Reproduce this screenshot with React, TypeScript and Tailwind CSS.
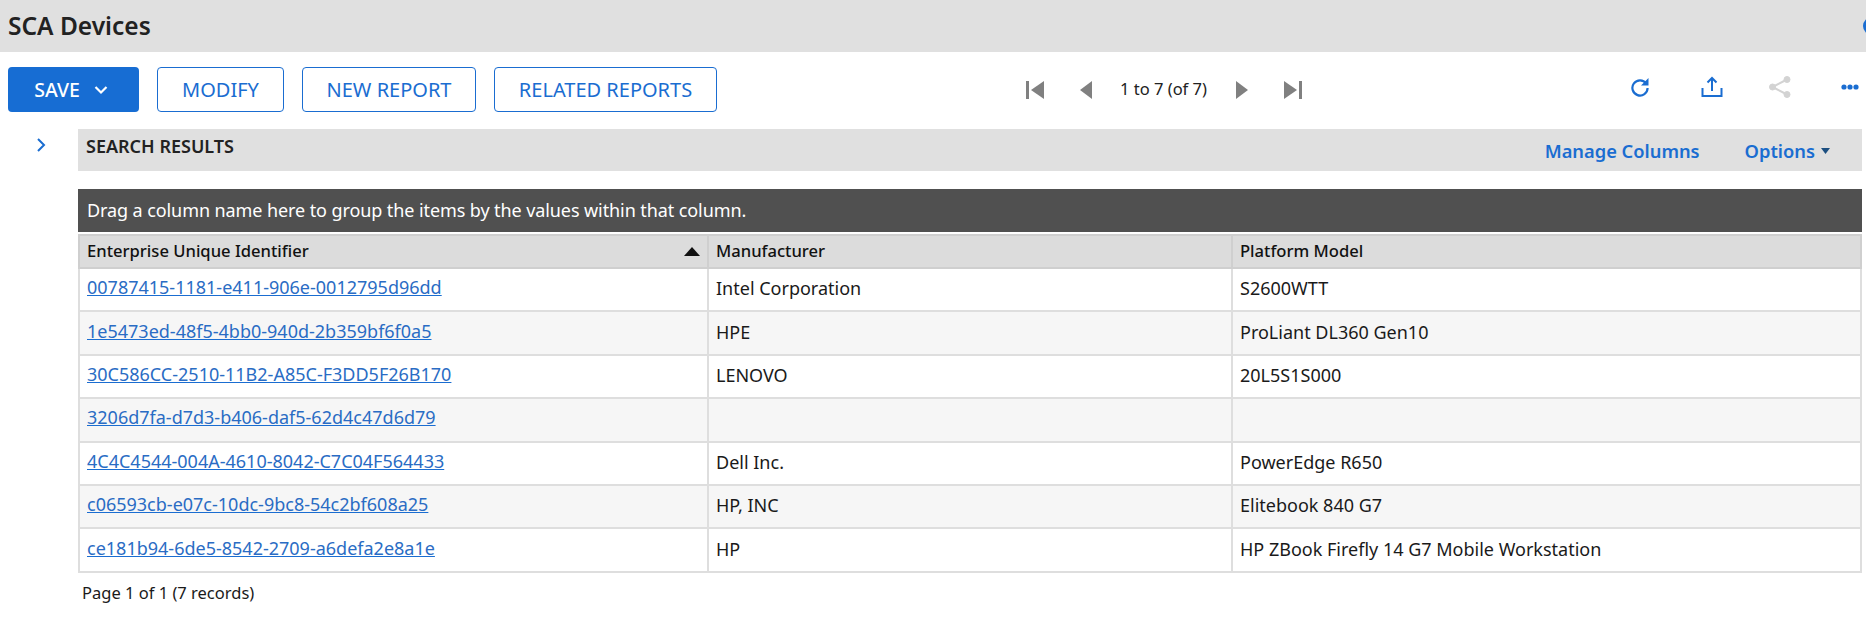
import React from "react";

const rows = [
  ["00787415-1181-e411-906e-0012795d96dd", "Intel Corporation", "S2600WTT"],
  ["1e5473ed-48f5-4bb0-940d-2b359bf6f0a5", "HPE", "ProLiant DL360 Gen10"],
  ["30C586CC-2510-11B2-A85C-F3DD5F26B170", "LENOVO", "20L5S1S000"],
  ["3206d7fa-d7d3-b406-daf5-62d4c47d6d79", "", ""],
  ["4C4C4544-004A-4610-8042-C7C04F564433", "Dell Inc.", "PowerEdge R650"],
  ["c06593cb-e07c-10dc-9bc8-54c2bf608a25", "HP, INC", "Elitebook 840 G7"],
  ["ce181b94-6de5-8542-2709-a6defa2e8a1e", "HP", "HP ZBook Firefly 14 G7 Mobile Workstation"],
];

function OutlineBtn({ label, w }: { label: string; w: string }) {
  return (
    <button className={`h-[45px] ${w} rounded-[4px] border border-[#1a6dd1] bg-white text-[20px] text-[#1a6dd1] flex items-center justify-center`}>
      {label}
    </button>
  );
}

export default function App() {
  return (
    <div className="w-[1866px] h-[619px] overflow-hidden bg-white text-[#1a1a1a] font-['Noto_Sans','Open_Sans',sans-serif]">
      <div className="h-[52px] bg-[#e0e0e0] flex items-center justify-between overflow-hidden">
        <h1 className="ml-2 text-[24.5px] font-semibold text-[#222] leading-none">SCA Devices</h1>
        <div className="w-[18px] h-[18px] -mr-[15px] rounded-full bg-[#1a6dd1]" />
      </div>

      <div className="h-[77px] pt-[15px] flex items-start relative">
        <div className="ml-2 flex gap-[18px]">
          <button className="h-[45px] w-[131px] pr-[5px] rounded-[4px] bg-[#176dd3] text-white text-[19.5px] font-medium flex items-center justify-center gap-[14px]">
            SAVE
            <svg width="14" height="10" viewBox="0 0 14 10" fill="none" stroke="white" strokeWidth="2.2"><path d="M1.5 2 L7 7.5 L12.5 2" /></svg>
          </button>
          <OutlineBtn label="MODIFY" w="w-[127px]" />
          <OutlineBtn label="NEW REPORT" w="w-[174px]" />
          <OutlineBtn label="RELATED REPORTS" w="w-[223px]" />
        </div>

        <div className="absolute left-[1026px] top-[15px] h-[45px] flex items-center">
          <svg width="18" height="18" viewBox="0 0 18 18" fill="#808080"><rect x="0" y="0" width="3" height="18" /><path d="M18 0 V18 L5 9 Z" /></svg>
          <svg className="ml-[36px]" width="12" height="18" viewBox="0 0 12 18" fill="#808080"><path d="M12 0 V18 L0 9 Z" /></svg>
          <span className="ml-[28px] text-[16.5px] text-[#222] w-[86px] whitespace-nowrap">1 to 7 (of 7)</span>
          <svg className="ml-[30px]" width="12" height="18" viewBox="0 0 12 18" fill="#808080"><path d="M0 0 V18 L12 9 Z" /></svg>
          <svg className="ml-[36px]" width="18" height="18" viewBox="0 0 18 18" fill="#808080"><path d="M0 0 V18 L13 9 Z" /><rect x="15" y="0" width="3" height="18" /></svg>
        </div>

        <div className="absolute left-[1630px] top-[24px] flex items-center">
          <svg width="20" height="20" viewBox="0 0 20 20" fill="none">
            <path d="M16.2 6.5 A7.6 7.6 0 1 0 17.6 11" stroke="#1a6dd1" strokeWidth="2.2" />
            <path d="M18.5 1 V8.5 H11 Z" fill="#1a6dd1" />
          </svg>
          <svg className="ml-[51px]" width="22" height="22" viewBox="0 0 22 22" fill="none" stroke="#1a6dd1" strokeWidth="2">
            <path d="M11 15 V2 M6.5 6.5 L11 2 L15.5 6.5" />
            <path d="M1.5 12 V20 H20.5 V12" />
          </svg>
          <svg className="ml-[46px]" width="22" height="22" viewBox="0 0 22 22" fill="#d3d3d3" stroke="#d3d3d3">
            <circle cx="3.5" cy="11" r="3" /><circle cx="18" cy="3.5" r="3" /><circle cx="18" cy="18.5" r="3" />
            <path d="M3.5 11 L18 3.5 M3.5 11 L18 18.5" strokeWidth="2" fill="none" />
          </svg>
          <svg className="ml-[50px]" width="18" height="6" viewBox="0 0 18 6" fill="#1a6dd1">
            <circle cx="3" cy="3" r="2.6" /><circle cx="9" cy="3" r="2.6" /><circle cx="15" cy="3" r="2.6" />
          </svg>
        </div>
      </div>

      <div className="flex">
        <div className="w-[78px] shrink-0 pl-[36px] pt-[8px]">
          <svg width="10" height="16" viewBox="0 0 10 16" fill="none" stroke="#1a6dd1" strokeWidth="2"><path d="M2 2 L8 8 L2 14" /></svg>
        </div>
        <div className="w-[1784px]">
          <div className="h-[42px] bg-[#e0e0e0] flex justify-between">
            <div className="pl-[8px] pt-[5px] text-[18px] font-semibold text-[#222] leading-[24px]">SEARCH RESULTS</div>
            <div className="flex items-start pt-[10px] text-[18.3px] font-semibold text-[#1a6dd1] leading-[24px]">
              <span>Manage Columns</span>
              <span className="ml-[45px] mr-[32px] flex items-center gap-[6px]">
                Options
                <svg width="9" height="6" viewBox="0 0 9 6" fill="#1c4f80"><path d="M0 0 H9 L4.5 6 Z" /></svg>
              </span>
            </div>
          </div>

          <div className="mt-[18px] h-[43px] bg-[#505050] text-white text-[18px] tracking-[-0.09px] pl-[9px] flex items-center">
            Drag a column name here to group the items by the values within that column.
          </div>

          <table className="mt-[2px] w-full table-fixed border-collapse text-[18px]">
            <colgroup>
              <col className="w-[629px]" />
              <col className="w-[524px]" />
              <col />
            </colgroup>
            <thead>
              <tr className="h-[33px] bg-[#dcdcdc] text-[#111] text-[16.6px]">
                <th className="border-2 border-[#cfcfcf] pl-[7px] pr-[7px] text-left font-medium">
                  <div className="flex items-center justify-between">
                    Enterprise Unique Identifier
                    <svg width="16" height="9" viewBox="0 0 16 9" fill="#111"><path d="M8 0 L16 9 H0 Z" /></svg>
                  </div>
                </th>
                <th className="border-2 border-[#cfcfcf] pl-[7px] text-left font-medium">Manufacturer</th>
                <th className="border-2 border-[#cfcfcf] pl-[7px] text-left font-medium">Platform Model</th>
              </tr>
            </thead>
            <tbody>
              {rows.map((r, i) => (
                <tr key={r[0]} className={`h-[43.4px] ${i % 2 ? "bg-[#f6f6f6]" : "bg-white"}`}>
                  <td className="border-2 border-[#dedede] pl-[7px] pb-[4px]">
                    <a href="#" className="text-[#2a6cc4] underline decoration-[#1a6dd1]">{r[0]}</a>
                  </td>
                  <td className="border-2 border-[#dedede] pl-[7px] pb-[2px] text-[#1a1a1a]">{r[1]}</td>
                  <td className="border-2 border-[#dedede] pl-[7px] pb-[2px] text-[#1a1a1a]">{r[2]}</td>
                </tr>
              ))}
            </tbody>
          </table>

          <div className="mt-[9px] pl-[4px] text-[16.5px] leading-[22px] text-[#1a1a1a]">Page 1 of 1 (7 records)</div>
        </div>
      </div>
    </div>
  );
}
